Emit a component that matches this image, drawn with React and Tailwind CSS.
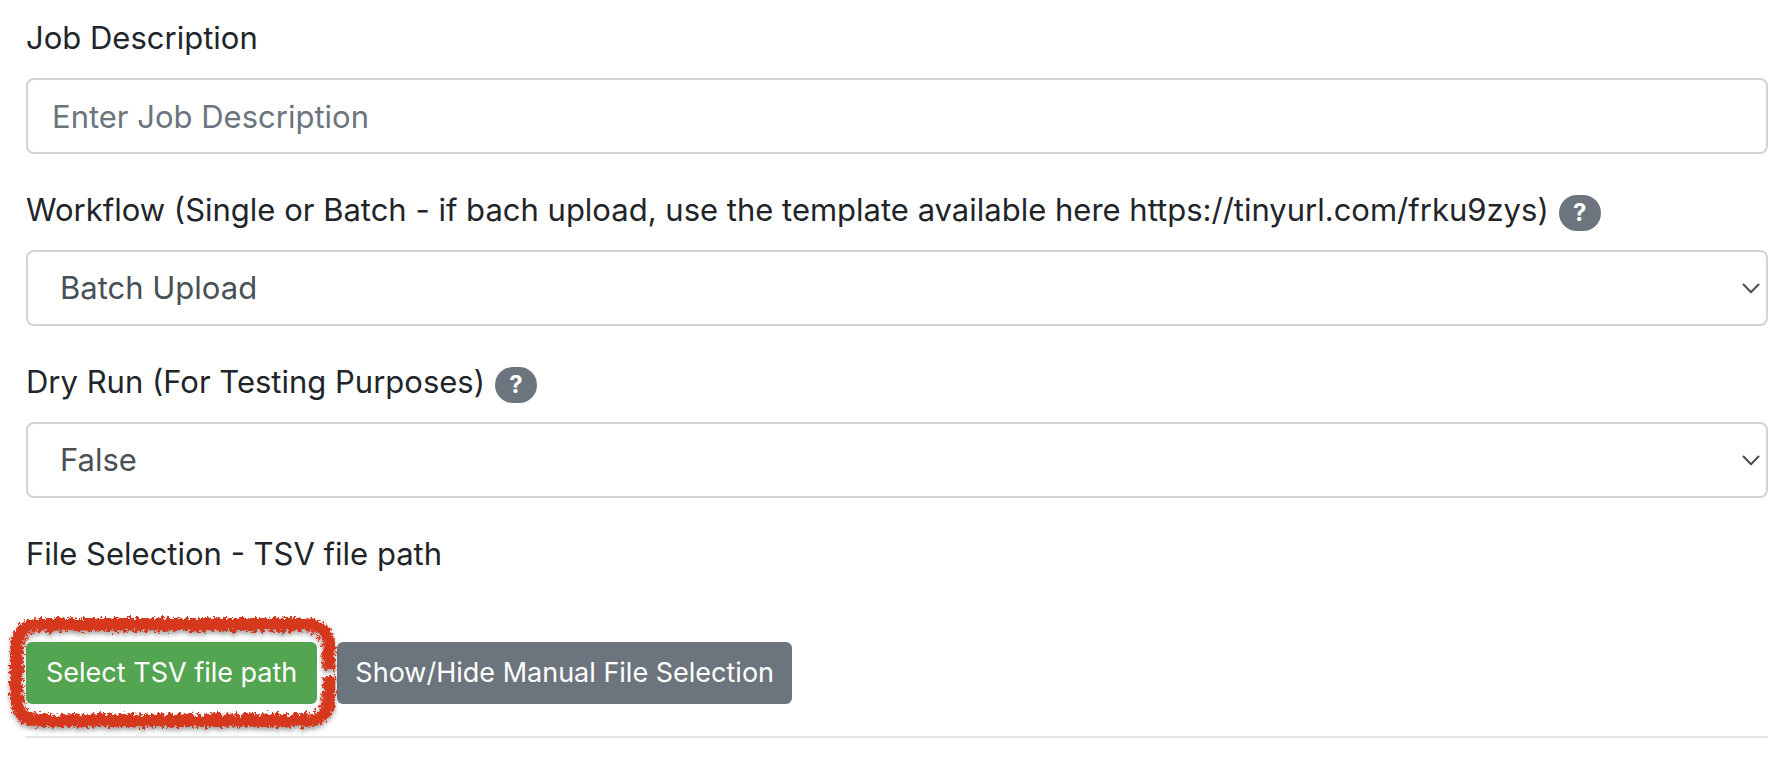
import { useState } from "react";

function HelpBadge({ topic }) {
  return (
    <button
      type="button"
      aria-label={`Help: ${topic}`}
      className="mb-[3px] flex h-9 w-[42px] shrink-0 items-center justify-center rounded-full bg-[#6c757d] text-2xl font-bold text-white"
    >
      ?
    </button>
  );
}

function Field({ id, label, help, children }) {
  return (
    <div className="flex flex-col gap-4">
      <div className="flex items-end gap-2.5">
        <label htmlFor={id} className="leading-[48px]">
          {label}
        </label>
        {help && <HelpBadge topic={label} />}
      </div>
      {children}
    </div>
  );
}

function Select({ id, options, value, onChange }) {
  return (
    <div className="relative">
      <select
        id={id}
        value={value}
        onChange={(e) => onChange(e.target.value)}
        className="block h-[76px] w-full appearance-none rounded-lg border-2 border-[#ced4da] bg-white px-8 text-[#495057]"
      >
        {options.map((option) => (
          <option key={option}>{option}</option>
        ))}
      </select>
      <svg
        viewBox="0 0 18 12"
        className="pointer-events-none absolute top-8 right-2 h-3 w-[18px]"
        fill="none"
        stroke="#495057"
        strokeWidth="2"
        strokeLinecap="round"
        strokeLinejoin="round"
        aria-hidden="true"
      >
        <path d="M1.5 2.5 9 10.3 16.5 2.5" />
      </svg>
    </div>
  );
}

function BrushOutline() {
  return (
    <svg
      viewBox="0 0 342 134"
      preserveAspectRatio="none"
      className="pointer-events-none absolute -top-9 -left-6 h-[134px] w-[calc(100%+50px)] max-w-none"
      aria-hidden="true"
    >
      <defs>
        <filter id="brush" x="0" y="0" width="342" height="134" filterUnits="userSpaceOnUse">
          <feTurbulence type="fractalNoise" baseFrequency="0.32" numOctaves="3" seed="7" result="noise" />
          <feDisplacementMap in="SourceGraphic" in2="noise" scale="9" xChannelSelector="R" yChannelSelector="G" result="rough" />
          <feDropShadow in="rough" dx="0" dy="3" stdDeviation="2" floodColor="#000" floodOpacity="0.35" />
        </filter>
      </defs>
      <g filter="url(#brush)" fill="none" stroke="#d5391f">
        <path
          strokeWidth="12"
          d="M328 64V42Q328 18 303 18H39Q14 18 14 44V90Q14 115 38 115H303Q328 115 328 91V70"
        />
        <path
          strokeWidth="2"
          strokeDasharray="5 3 9 4 3 5"
          d="M321 62V44Q321 25 301 25H40Q21 25 21 46V89Q21 108 40 108H301Q321 108 321 90V72"
        />
      </g>
    </svg>
  );
}

export default function App() {
  const [workflow, setWorkflow] = useState("Batch Upload");
  const [dryRun, setDryRun] = useState("False");

  return (
    <form
      className="flex flex-col gap-8 bg-white pt-3.5 pr-[18px] pb-5 pl-[26px] font-['Inter','Liberation_Sans',sans-serif] text-[31px] text-[#212529]"
      onSubmit={(e) => e.preventDefault()}
    >
      <Field id="description" label="Job Description">
        <input
          id="description"
          type="text"
          placeholder="Enter Job Description"
          className="h-[76px] w-full rounded-lg border-2 border-[#ced4da] bg-white px-6 text-[#495057] placeholder:text-[#6c757d]"
        />
      </Field>
      <Field
        id="workflow"
        label="Workflow (Single or Batch - if bach upload, use the template available here https://tinyurl.com/frku9zys)"
        help
      >
        <Select
          id="workflow"
          options={["Batch Upload", "Single Upload"]}
          value={workflow}
          onChange={setWorkflow}
        />
      </Field>
      <Field id="dry-run" label="Dry Run (For Testing Purposes)" help>
        <Select id="dry-run" options={["False", "True"]} value={dryRun} onChange={setDryRun} />
      </Field>
      <section className="flex flex-col gap-16">
        <h2 className="leading-[48px]">File Selection - TSV file path</h2>
        <div className="flex gap-5 text-[27px] text-white">
          <div className="relative">
            <button type="button" className="h-[62px] rounded-md bg-[#53a551] px-5">
              Select TSV file path
            </button>
            <BrushOutline />
          </div>
          <button type="button" className="h-[62px] rounded-md bg-[#6c757d] px-[18px]">
            Show/Hide Manual File Selection
          </button>
        </div>
      </section>
      <hr className="border-t-2 border-[#e5e5e5]" />
    </form>
  );
}
